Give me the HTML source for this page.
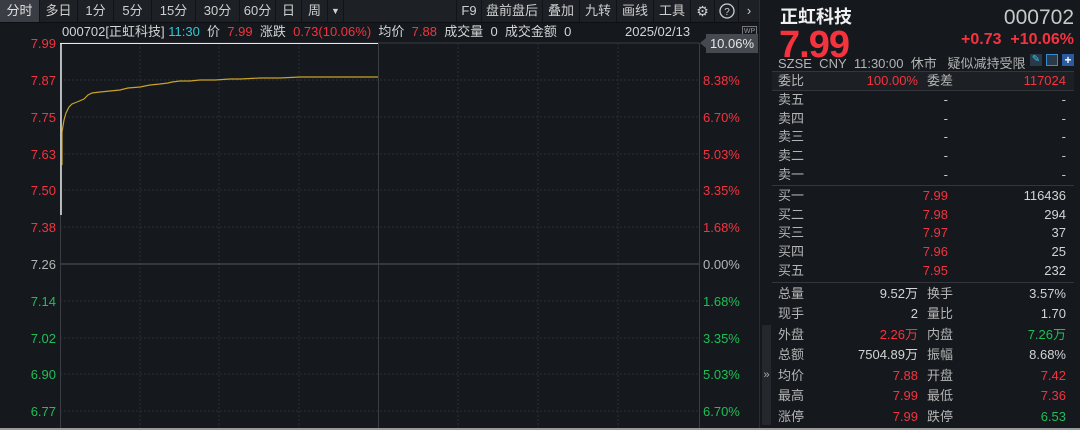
<!DOCTYPE html>
<html><head><meta charset="utf-8"><style>
*{margin:0;padding:0;box-sizing:border-box}
body{width:1080px;height:430px;background:#15181d;overflow:hidden;position:relative;font-family:"Liberation Sans","Noto Sans CJK SC",sans-serif;color:#c9c9c9}
.a{position:absolute;white-space:nowrap}
.r{color:#f5333f}.g{color:#1fbf55}.c{color:#2fc7d9}.w{color:#d4d4d4}.l{color:#b4b4b4}
.tb{position:absolute;left:0;top:0;width:760px;height:22px;background:#1d2025}
.tab{position:absolute;top:0;height:22px;line-height:22px;font-size:13px;text-align:center;color:#cfcfcf;border-right:1px solid #111317}
.ax{position:absolute;font-size:13px;line-height:14px}
.lx{right:1024px;text-align:right}
.rx{left:703px}
.row{position:absolute;left:778px;width:292px;font-size:13px;height:19px;line-height:19px}
.row span{position:absolute}
</style></head><body>
<div class="tb">
<div class="tab" style="left:0;width:40px;background:#3a3d44;color:#e0e0e0">分时</div>
<div class="tab" style="left:40px;width:38px">多日</div>
<div class="tab" style="left:78px;width:36px">1分</div>
<div class="tab" style="left:114px;width:38px">5分</div>
<div class="tab" style="left:152px;width:44px">15分</div>
<div class="tab" style="left:196px;width:44px">30分</div>
<div class="tab" style="left:240px;width:36px">60分</div>
<div class="tab" style="left:276px;width:26px">日</div>
<div class="tab" style="left:302px;width:26px">周</div>
<div class="tab" style="left:328px;width:16px;font-size:9px">▼</div>
<div class="tab" style="left:456px;width:26px;border-left:1px solid #111317">F9</div>
<div class="tab" style="left:482px;width:61px">盘前盘后</div>
<div class="tab" style="left:543px;width:37px">叠加</div>
<div class="tab" style="left:580px;width:37px">九转</div>
<div class="tab" style="left:617px;width:37px">画线</div>
<div class="tab" style="left:654px;width:37px">工具</div>
<div class="tab" style="left:691px;width:24px;font-size:14px">⚙</div>
<div class="tab" style="left:715px;width:24px"><svg width="16" height="16" style="margin-top:3px" viewBox="0 0 16 16"><circle cx="8" cy="8" r="7" fill="none" stroke="#cfcfcf" stroke-width="1.3"/><text x="8" y="12" font-size="10" text-anchor="middle" fill="#cfcfcf" font-family="Liberation Sans">?</text></svg></div>
<div class="tab" style="left:739px;width:21px">›</div>
</div>
<div style="position:absolute;left:0;top:22px;width:760px;height:1px;background:#0d0f12"></div>
<div class="a" style="left:62px;top:24px;font-size:13px;line-height:16px"><span class="w">000702[正虹科技]</span> <span class="c">11:30</span>&nbsp; <span class="w">价</span>&nbsp; <span class="r">7.99</span>&nbsp; <span class="w">涨跌</span>&nbsp; <span class="r">0.73(10.06%)</span>&nbsp; <span class="w">均价</span>&nbsp; <span class="r">7.88</span>&nbsp; <span class="w">成交量</span>&nbsp; <span class="w">0</span>&nbsp; <span class="w">成交金额</span>&nbsp; <span class="w">0</span></div>
<div class="a w" style="left:625px;top:24px;font-size:13px;line-height:16px">2025/02/13</div>
<div class="a" style="left:742px;top:26px;width:15px;height:11px;border:1px solid #777;font-size:7px;line-height:9px;text-align:center;color:#999">WP</div>
<svg class="a" style="left:0;top:0" width="760" height="430">
<g stroke="#2c2f35" stroke-width="1" stroke-dasharray="2,2">
<line x1="60" y1="80" x2="699" y2="80"/><line x1="60" y1="117" x2="699" y2="117"/><line x1="60" y1="154" x2="699" y2="154"/><line x1="60" y1="190" x2="699" y2="190"/><line x1="60" y1="227" x2="699" y2="227"/>
<line x1="60" y1="301" x2="699" y2="301"/><line x1="60" y1="338" x2="699" y2="338"/><line x1="60" y1="374" x2="699" y2="374"/><line x1="60" y1="411" x2="699" y2="411"/>
<line x1="140" y1="43" x2="140" y2="430"/><line x1="219" y1="43" x2="219" y2="430"/><line x1="299" y1="43" x2="299" y2="430"/><line x1="458" y1="43" x2="458" y2="430"/><line x1="538" y1="43" x2="538" y2="430"/><line x1="618" y1="43" x2="618" y2="430"/>
</g>
<line x1="60" y1="43" x2="699" y2="43" stroke="#3a3d43"/>
<line x1="60" y1="264" x2="699" y2="264" stroke="#55585e"/>
<line x1="60.5" y1="43" x2="60.5" y2="430" stroke="#3a3d43"/>
<line x1="378.5" y1="43" x2="378.5" y2="430" stroke="#3a3d43"/>
<line x1="699.5" y1="43" x2="699.5" y2="430" stroke="#3a3d43"/>
<line x1="60" y1="43.5" x2="378" y2="43.5" stroke="#e8e8e8"/>
<line x1="61" y1="43" x2="61" y2="215" stroke="#e8e8e8" stroke-width="1.5"/>
<polyline fill="none" stroke="#c9a227" stroke-width="1.2" points="62,165 62,132 64,120 66,113 69,107 72,104 77,102 84,99 88,95 92,93 100,92 110,91 120,90 128,88 140,87 150,85 160,84 168,83 172,82 180,81 190,81 200,80 215,80 230,79 240,79 260,78 280,78 300,77 378,77"/>
<line x1="760.5" y1="0" x2="760.5" y2="430" stroke="#2a2d33" stroke-width="3"/>
</svg>
<div class="ax lx r" style="top:37px">7.99</div>
<div class="ax lx r" style="top:74px">7.87</div>
<div class="ax lx r" style="top:111px">7.75</div>
<div class="ax lx r" style="top:148px">7.63</div>
<div class="ax lx r" style="top:184px">7.50</div>
<div class="ax lx r" style="top:221px">7.38</div>
<div class="ax lx l" style="top:258px">7.26</div>
<div class="ax lx g" style="top:295px">7.14</div>
<div class="ax lx g" style="top:332px">7.02</div>
<div class="ax lx g" style="top:368px">6.90</div>
<div class="ax lx g" style="top:405px">6.77</div>
<div class="a" style="left:706px;top:34px;width:52px;height:19px;background:#464950;color:#e6e6e6;font-size:13px;line-height:19px;text-align:center">10.06%</div>
<div class="a" style="left:700px;top:38px;width:0;height:0;border-top:5px solid transparent;border-bottom:5px solid transparent;border-right:6px solid #464950"></div>
<div class="ax rx r" style="top:74px">8.38%</div>
<div class="ax rx r" style="top:111px">6.70%</div>
<div class="ax rx r" style="top:148px">5.03%</div>
<div class="ax rx r" style="top:184px">3.35%</div>
<div class="ax rx r" style="top:221px">1.68%</div>
<div class="ax rx l" style="top:258px">0.00%</div>
<div class="ax rx g" style="top:295px">1.68%</div>
<div class="ax rx g" style="top:332px">3.35%</div>
<div class="ax rx g" style="top:368px">5.03%</div>
<div class="ax rx g" style="top:405px">6.70%</div>
<div class="a" style="left:762px;top:325px;width:9px;height:100px;background:#24272c;color:#aaa;font-size:11px;line-height:100px;text-align:center">»</div>
<div class="a" style="left:780px;top:6px;font-size:18px;line-height:22px;font-weight:bold;color:#f0f0f0">正虹科技</div>
<div class="a" style="right:6px;top:6px;font-size:21px;line-height:24px;color:#c8c8c8">000702</div>
<div class="a r" style="left:779px;top:30px;font-size:38px;font-weight:bold;line-height:30px;letter-spacing:-1px">7.99</div>
<div class="a r" style="right:6px;top:31px;font-size:16px;line-height:18px;font-weight:bold">+0.73 &nbsp;+10.06%</div>
<div class="a l" style="left:778px;top:53px;font-size:13px">SZSE&nbsp; CNY&nbsp; 11:30:00&nbsp; 休市&nbsp;&nbsp; 疑似减持受限</div>
<div class="a" style="left:1030px;top:54px;width:12px;height:12px;background:#2a3a48;color:#3cc6e0;font-size:10px;line-height:12px;text-align:center">✎</div>
<div class="a" style="left:1046px;top:54px;width:12px;height:12px;background:#2a3a48;border:1px solid #3a8ad0"></div>
<div class="a" style="left:1062px;top:54px;width:12px;height:12px;background:#2a5aa0;color:#fff;font-size:12px;line-height:12px;text-align:center;font-weight:bold">+</div>
<div class="a" style="left:772px;top:71px;width:302px;height:1px;background:#33363c"></div>
<div class="a" style="left:772px;top:72px;width:302px;height:18px;background:#1c1f24"></div>
<div class="row" style="top:71px"><span class="l" style="left:0">委比</span><span class="r" style="right:152px">100.00%</span><span class="l" style="left:149px">委差</span><span class="r" style="right:4px">117024</span></div>
<div class="a" style="left:772px;top:90px;width:302px;height:1px;background:#33363c"></div>
<div class="row" style="top:90px"><span class="l" style="left:0">卖五</span><span style="right:122px">-</span><span style="right:4px">-</span></div>
<div class="row" style="top:109px"><span class="l" style="left:0">卖四</span><span style="right:122px">-</span><span style="right:4px">-</span></div>
<div class="row" style="top:127px"><span class="l" style="left:0">卖三</span><span style="right:122px">-</span><span style="right:4px">-</span></div>
<div class="row" style="top:146px"><span class="l" style="left:0">卖二</span><span style="right:122px">-</span><span style="right:4px">-</span></div>
<div class="row" style="top:165px"><span class="l" style="left:0">卖一</span><span style="right:122px">-</span><span style="right:4px">-</span></div>
<div class="a" style="left:772px;top:185px;width:302px;height:1px;background:#33363c"></div>
<div class="row" style="top:186px"><span class="l" style="left:0">买一</span><span class="r" style="right:122px">7.99</span><span class="w" style="right:4px">116436</span></div>
<div class="row" style="top:205px"><span class="l" style="left:0">买二</span><span class="r" style="right:122px">7.98</span><span class="w" style="right:4px">294</span></div>
<div class="row" style="top:223px"><span class="l" style="left:0">买三</span><span class="r" style="right:122px">7.97</span><span class="w" style="right:4px">37</span></div>
<div class="row" style="top:242px"><span class="l" style="left:0">买四</span><span class="r" style="right:122px">7.96</span><span class="w" style="right:4px">25</span></div>
<div class="row" style="top:261px"><span class="l" style="left:0">买五</span><span class="r" style="right:122px">7.95</span><span class="w" style="right:4px">232</span></div>
<div class="a" style="left:772px;top:282px;width:302px;height:1px;background:#33363c"></div>
<div class="row" style="top:284px"><span class="l" style="left:0">总量</span><span class="w" style="right:152px">9.52万</span><span class="l" style="left:149px">换手</span><span class="w" style="right:4px">3.57%</span></div>
<div class="row" style="top:304px"><span class="l" style="left:0">现手</span><span class="w" style="right:152px">2</span><span class="l" style="left:149px">量比</span><span class="w" style="right:4px">1.70</span></div>
<div class="row" style="top:325px"><span class="l" style="left:0">外盘</span><span class="r" style="right:152px">2.26万</span><span class="l" style="left:149px">内盘</span><span class="g" style="right:4px">7.26万</span></div>
<div class="row" style="top:345px"><span class="l" style="left:0">总额</span><span class="w" style="right:152px">7504.89万</span><span class="l" style="left:149px">振幅</span><span class="w" style="right:4px">8.68%</span></div>
<div class="row" style="top:366px"><span class="l" style="left:0">均价</span><span class="r" style="right:152px">7.88</span><span class="l" style="left:149px">开盘</span><span class="r" style="right:4px">7.42</span></div>
<div class="row" style="top:386px"><span class="l" style="left:0">最高</span><span class="r" style="right:152px">7.99</span><span class="l" style="left:149px">最低</span><span class="r" style="right:4px">7.36</span></div>
<div class="row" style="top:407px"><span class="l" style="left:0">涨停</span><span class="r" style="right:152px">7.99</span><span class="l" style="left:149px">跌停</span><span class="g" style="right:4px">6.53</span></div>
<div class="a" style="left:0;top:428px;width:1080px;height:2px;background:#9a9a9a"></div>
</body></html>
